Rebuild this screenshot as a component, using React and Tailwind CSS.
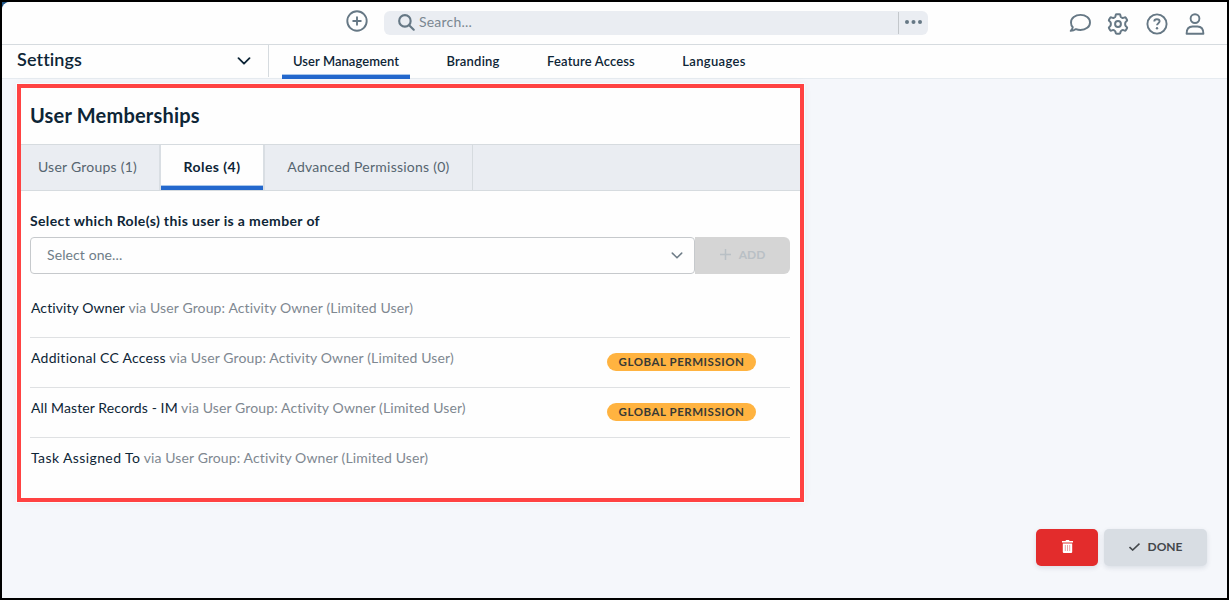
// UserMemberships Page
// Settings screen listing the roles a user belongs to

import { useState } from 'react';

const navTabs = [
  { label: 'User Management', className: 'w-32 tracking-[0.05px]' },
  { label: 'Branding', className: 'w-[126px] tracking-[0.2px]' },
  { label: 'Feature Access', className: 'w-[110px] tracking-[0.15px]' },
  { label: 'Languages', className: 'w-[136px] tracking-[0.35px]' }
];

const roles = [
  { name: 'Activity Owner', isGlobal: false, className: 'tracking-[0.08px]' },
  { name: 'Additional CC Access', isGlobal: true, className: 'tracking-[0.25px]' },
  { name: 'All Master Records - IM', isGlobal: true, className: 'tracking-[0.1px]' },
  { name: 'Task Assigned To', isGlobal: false, className: 'tracking-[0.4px]' }
];

function Chevron({ className }) {
  return (
    <svg className={className} viewBox="0 0 14 8" fill="none" stroke="currentColor" strokeWidth="1.8" strokeLinecap="round" strokeLinejoin="round">
      <path d="M1.5 1.2 7 6.7l5.500-5.500" />
    </svg>
  );
}

function Header() {
  return (
    <header className="flex h-[43px] shrink-0 border-b border-[#d6dbdf] bg-[#fefefe] pl-[344px] text-[#667885]">
      <svg className="mt-2 h-[22px] w-[22px]" viewBox="0 0 22 22" fill="none" stroke="currentColor" strokeWidth="1.9" strokeLinecap="round">
        <circle cx="11" cy="11" r="9.700" />
        <path d="M11 7.200v7.600M7.200 11h7.600" />
      </svg>
      <div className="mt-[9px] ml-4 flex h-6 w-[544px] items-center rounded-md bg-[#eaedf2] pl-[14px]">
        <svg className="-mt-0.5 h-[17px] w-[17px]" viewBox="0 0 16 16" fill="none" stroke="currentColor" strokeWidth="2" strokeLinecap="round">
          <circle cx="6.500" cy="6.500" r="5.400" />
          <path d="m10.500 10.500 4.300 4.300" />
        </svg>
        <span className="-mt-0.5 ml-1 flex-1 text-[14px] leading-5 tracking-[0.2px] text-[#7a8791]">Search...</span>
        <div className="flex h-[22px] w-[30px] items-center justify-center border-l border-[#c3c7cb] pb-0.5">
          <svg className="h-1 w-[18px]" viewBox="0 0 18 4" fill="currentColor">
            <circle cx="2" cy="2" r="2" />
            <circle cx="8.500" cy="2" r="2" />
            <circle cx="15" cy="2" r="2" />
          </svg>
        </div>
      </div>
      <div className="mt-[11px] mr-[21px] ml-auto flex gap-4">
        {/* Chat */}
        <svg className="h-[22px] w-[22px]" viewBox="0 0 22 22" fill="none" stroke="currentColor" strokeWidth="1.900" strokeLinejoin="round">
          <path d="M11.500 1.900c5.300 0 9.500 3.100 9.500 7.500s-4.200 7.600-9.500 7.600c-1.700 0-3.200-.3-4.600-.9-1.400 1.100-3.300 1.800-5.200 1.800 1-.9 1.900-2.100 2.100-3.700C2.600 13.100 2 11.300 2 9.400c0-4.400 4.200-7.500 9.500-7.500Z" />
        </svg>
        {/* Gear */}
        <svg className="mr-px h-[22px] w-[22px]" viewBox="0 0 22 22" fill="none" stroke="currentColor" strokeWidth="2" strokeLinejoin="round">
          <path d="M9.600 1.300h2.800q.7 0 .9.700l.3 1.400q.2.700.9 1l.7.400q.6.300 1.200.1l1.300-.5q.7-.2 1.100.4l1.200 2q.4.700-.2 1.200l-.9.800q-.7.600-.7 1.400v1.600q0 .8.700 1.400l.9.800q.6.500.2 1.200l-1.200 2q-.4.600-1.100.4l-1.300-.5q-.6-.2-1.200.1l-.7.400q-.7.300-.9 1l-.3 1.400q-.2.700-.9.700H9.600q-.7 0-.9-.7l-.3-1.400q-.2-.7-.9-1l-.7-.4q-.6-.3-1.200-.1l-1.300.5q-.7.200-1.100-.4l-1.200-2q-.4-.7.200-1.200l.9-.8q.7-.6.700-1.400v-1.600q0-.8-.7-1.400l-.9-.8q-.6-.5-.2-1.200l1.200-2q.4-.6 1.100-.4l1.300.5q.6.200 1.200-.1l.7-.4q.7-.3.9-1l.3-1.400q.2-.7.900-.7Z" />
          <circle cx="11" cy="11" r="2.900" />
        </svg>
        {/* Help */}
        <svg className="h-[22px] w-[22px]" viewBox="0 0 22 22" fill="none" stroke="currentColor" strokeWidth="1.900">
          <circle cx="11" cy="11" r="9.600" />
          <path d="M8.300 8.400c0-1.400 1.100-2.200 2.600-2.200s2.700.8 2.700 2.100c0 1.800-2.600 1.900-2.600 4" />
          <circle cx="11" cy="15.200" r="1.200" fill="currentColor" stroke="none" />
        </svg>
        {/* Profile */}
        <svg className="h-[22px] w-[22px]" viewBox="0 0 22 22" fill="none" stroke="currentColor" strokeWidth="1.900" strokeLinejoin="round">
          <circle cx="11" cy="5.600" r="4.400" />
          <path d="M2.600 20.700c0-4.700 2.300-7.200 6-7.200h4.800c3.700 0 6 2.500 6 7.200Z" />
        </svg>
      </div>
    </header>
  );
}

function SettingsNav() {
  return (
    <nav className="flex h-[34px] shrink-0 border-b border-[#e6ebf0] bg-[#fefefe] text-[#0d2536]">
      <div className="flex h-8 w-[267px] items-center justify-between border-r border-[#d6dbdf] pr-[17px] pl-[15px]">
        <span className="-mt-[3px] text-[18px] font-semibold tracking-[0.1px]">Settings</span>
        <Chevron className="h-2 w-[14px]" />
      </div>
      <div className="ml-[13px] flex text-[13px] font-semibold">
        {navTabs.map((tab, i) => (
          <div
            key={tab.label}
            className={`flex h-[34px] justify-center pt-1.5 ${i === 0 ? 'border-b-4 border-[#2468cd] shadow-[inset_0_-1px_0_#a9c6ea]' : ''} ${tab.className}`}
          >
            <span className="leading-5 whitespace-nowrap">{tab.label}</span>
          </div>
        ))}
      </div>
    </nav>
  );
}

function MembershipTabs({ active, onChange }) {
  return (
    <div className="flex h-[47px] border-y border-[#d6dbdf] bg-[#eaedf2] text-[14px] text-[#566570]">
      <button className="w-[138px] pr-[5px] pb-0.5 tracking-[0.24px]" onClick={() => onChange('groups')}>User Groups (1)</button>
      <button
        className={`w-[106px] border-x-2 border-[#d9dee3] ${active === 'roles' ? 'bg-[#fefefe] font-bold text-[#0d2536]' : ''}`}
        onClick={() => onChange('roles')}
      >
        <span className="flex h-[45px] items-center justify-center border-b-4 border-[#2468cd] pt-0.5 tracking-[0.45px] shadow-[inset_0_-1px_0_#a9c6ea]">
          Roles (4)
        </span>
      </button>
      <button className="w-[208px] border-r border-[#d6dbdf] pb-0.5 tracking-[0.25px]" onClick={() => onChange('advanced')}>
        Advanced Permissions (0)
      </button>
    </div>
  );
}

function RoleRow({ role }) {
  return (
    <li className="flex h-[50px] justify-between border-b border-[#dfe1e3] pl-px last:border-b-0">
      <p className="pt-[10px] text-[14px] leading-5 tracking-[0.12px] text-[#7f8891]">
        <span className={`text-[#0d2536] ${role.className}`}>{role.name}</span> via User Group: Activity Owner (Limited User)
      </p>
      {role.isGlobal && (
        <span className="mt-[15px] mr-[34px] flex h-[18px] w-[149px] items-center justify-center rounded-full bg-[#ffb340] text-[11.5px] font-bold tracking-[0.53px] text-[#383a35]">
          GLOBAL PERMISSION
        </span>
      )}
    </li>
  );
}

function App() {
  const [activeTab, setActiveTab] = useState('roles');

  return (
    <div className="h-[600px] w-[1229px] overflow-hidden border-2 border-black bg-[#235888] font-['Lato',sans-serif]">
      <div className="flex h-[596px] flex-col overflow-hidden rounded-tl-lg bg-[#f5f7fb]">
        <Header />
        <SettingsNav />

        <main className="flex flex-1 flex-col">
          <section className="mt-[5px] ml-[15px] h-[418px] w-[787px] border-4 border-[#ff4242] bg-[#fefefe] shadow-[0_0_0_1px_#fafbfd,0_0_8px_rgba(30,60,90,0.07)]">
            <h1 className="h-14 pt-[13px] pl-[9px] text-[20px] leading-7 font-bold tracking-[0.2px] text-[#0d2536]">User Memberships</h1>
            <MembershipTabs active={activeTab} onChange={setActiveTab} />
            <div className="pt-5 pr-[10px] pl-[9px]">
              <label className="block text-[14px] leading-5 font-bold tracking-[0.37px] text-[#0d2536]">
                Select which Role(s) this user is a member of
              </label>
              <div className="mt-[6px] flex h-[37px]">
                <div className="flex w-[665px] items-center justify-between rounded border border-[#c6c9cc] pr-[11px] pl-4 text-[14px] text-[#6f7d88]">
                  <span className="-mt-0.5 tracking-[0.1px]">Select one...</span>
                  <Chevron className="h-[7px] w-3" />
                </div>
                <button disabled className="flex w-[95px] items-center justify-center rounded-r-md bg-[#d5d5d5] pb-0.5 text-[12px] font-bold text-[#b9c0c5]">
                  <svg className="mr-2 h-[11px] w-[11px]" viewBox="0 0 11 11" stroke="currentColor" strokeWidth="1.500">
                    <path d="M5.500 0v11M0 5.500h11" />
                  </svg>
                  ADD
                </button>
              </div>
              <ul className="mt-[14px]">
                {roles.map((role) => (
                  <RoleRow key={role.name} role={role} />
                ))}
              </ul>
            </div>
          </section>

          <div className="mt-[27px] mr-5 flex justify-end gap-[6px]">
            <button aria-label="Delete" className="flex h-[37px] w-[62px] items-center justify-center rounded-[5px] bg-[#e32c2c] text-white shadow-[0_2px_5px_rgba(30,50,70,0.12)]">
              <svg className="-mt-0.5 h-[13px] w-[11px]" viewBox="0 0 11 13" fill="currentColor">
                <path d="M0 1h3.500L4 0h3l.5 1H11v1.500H0ZM.8 3.500h9.400V12a1 1 0 0 1-1 1H1.800a1 1 0 0 1-1-1Z" />
                <path d="M3.300 5v6M5.500 5v6M7.700 5v6" stroke="#e58b90" strokeWidth=".8" />
              </svg>
            </button>
            <button className="flex h-[37px] w-[103px] items-center justify-center rounded-[5px] bg-[#d8dde3] pb-0.5 text-[12px] font-bold text-[#43474b] shadow-[0_2px_5px_rgba(30,50,70,0.12)]">
              <svg className="mr-2 h-2 w-[11px]" viewBox="0 0 11 8" fill="none" stroke="currentColor" strokeWidth="1.600">
                <path d="m.5 4 3.200 3L10.500.6" />
              </svg>
              DONE
            </button>
          </div>
        </main>
      </div>
    </div>
  );
}

export default App;
